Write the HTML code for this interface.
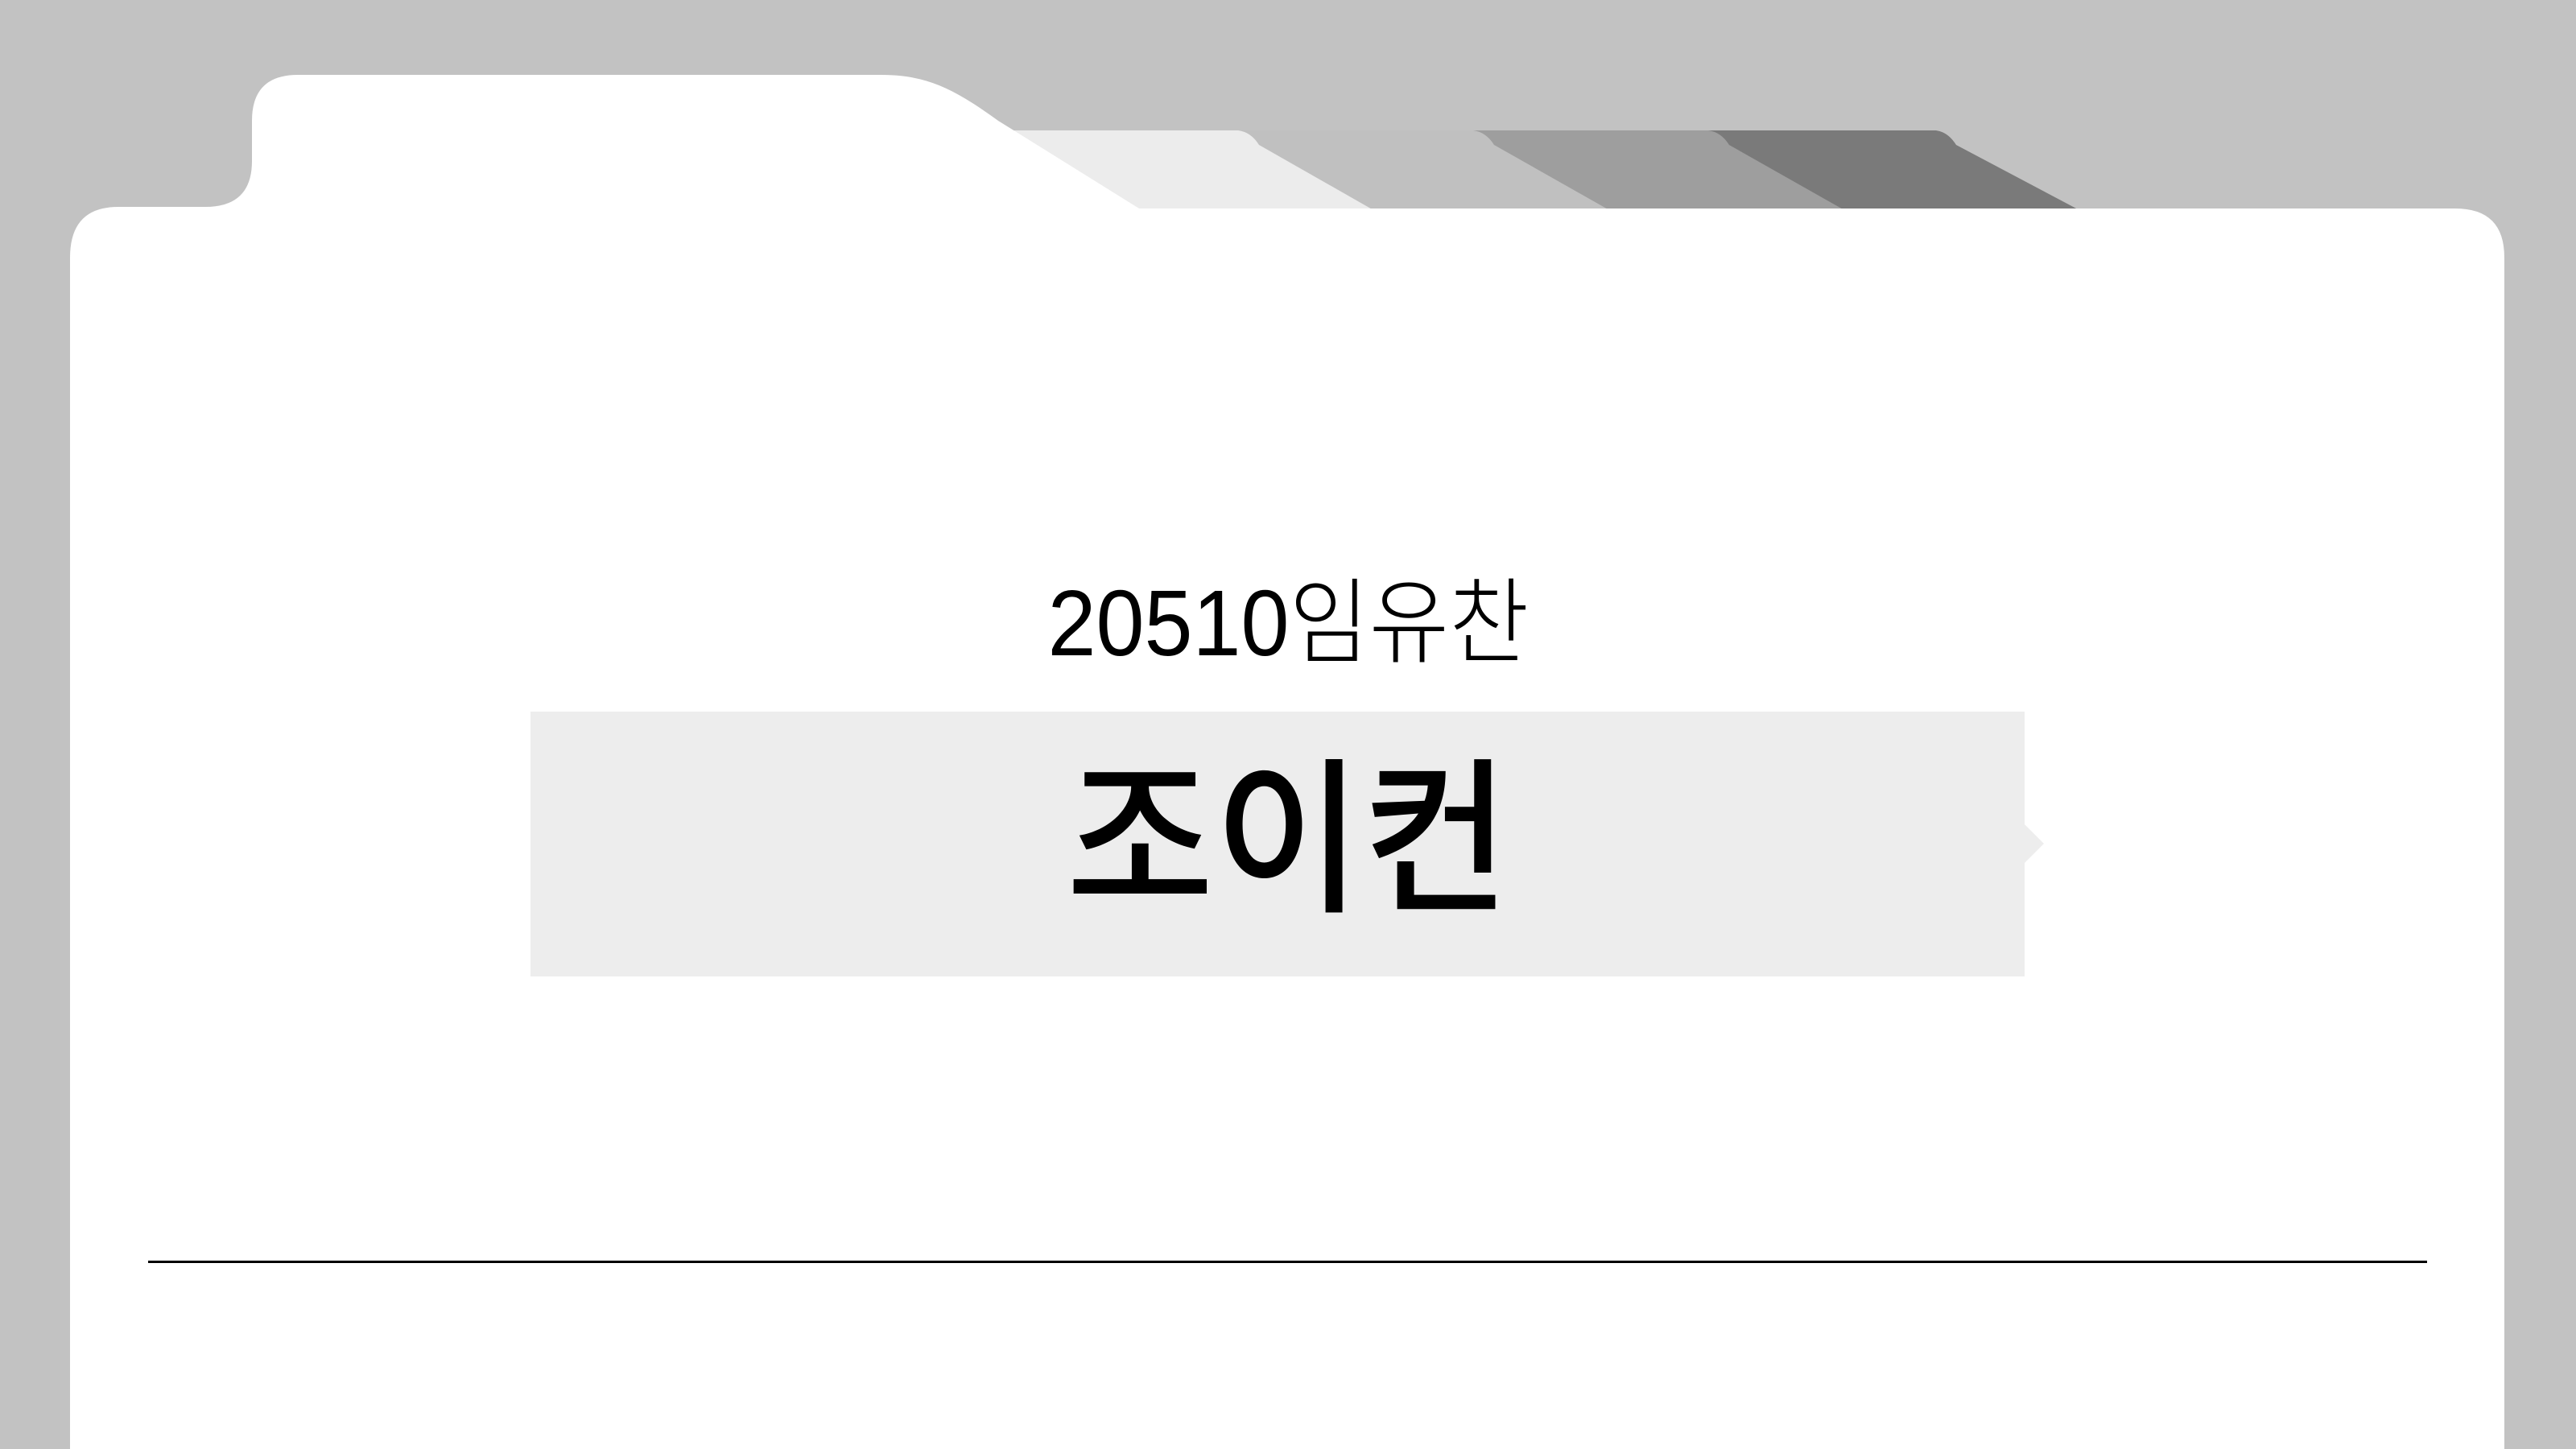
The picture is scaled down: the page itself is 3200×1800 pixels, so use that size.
<!DOCTYPE html>
<html><head><meta charset="utf-8"><style>
html,body{margin:0;padding:0}
body{width:3200px;height:1800px;background:#c2c2c2;position:relative;overflow:hidden;font-family:"Liberation Sans","Noto Sans CJK KR",sans-serif}
svg{position:absolute;left:0;top:0}
.t1{position:absolute;left:0;width:3200px;top:704px;text-align:center;font-size:116px;line-height:140px;color:#000;font-weight:300}
.t1 span{display:inline-block;transform:scaleX(0.93)}
.t2 span{display:inline-block;transform:scaleX(0.96)}
.t2{position:absolute;left:0;width:3200px;top:881px;text-align:center;font-size:208px;line-height:290px;color:#000;font-family:"Noto Sans CJK KR",sans-serif;font-weight:500}
</style></head><body>
<svg width="3200" height="1800" viewBox="0 0 3200 1800">
  <path d="M1250,162 L2405,162 Q2420,164 2430,180 L2600,270 L1250,270 Z" fill="#7a7a7a"/>
  <path d="M1250,162 L2122,162 Q2138,164 2148,180 L2307,270 L1250,270 Z" fill="#9e9e9e"/>
  <path d="M1250,162 L1830,162 Q1846,164 1856,180 L2015,270 L1250,270 Z" fill="#c0c0c0"/>
  <path d="M1250,162 L1538,162 Q1554,164 1564,180 L1722,270 L1250,270 Z" fill="#ececec"/>
  <path d="M87,320 Q87,257 147,257 L255,257 Q313,257 313,200 L313,150 Q313,93 370,93 L1095,93 C1150,93 1185,110 1240,150 L1415,259 L3050,259 Q3111,259 3111,320 L3111,1800 L87,1800 Z" fill="#fff"/>
  <rect x="659" y="884" width="1856" height="329" fill="#ededed"/>
  <path d="M2515,1024 L2539,1048 L2515,1072 Z" fill="#ededed"/>
  <rect x="184" y="1566" width="2831" height="3" fill="#000"/>
</svg>
<div class="t1"><span>20510임유찬</span></div>
<div class="t2"><span>조이컨</span></div>
</body></html>
